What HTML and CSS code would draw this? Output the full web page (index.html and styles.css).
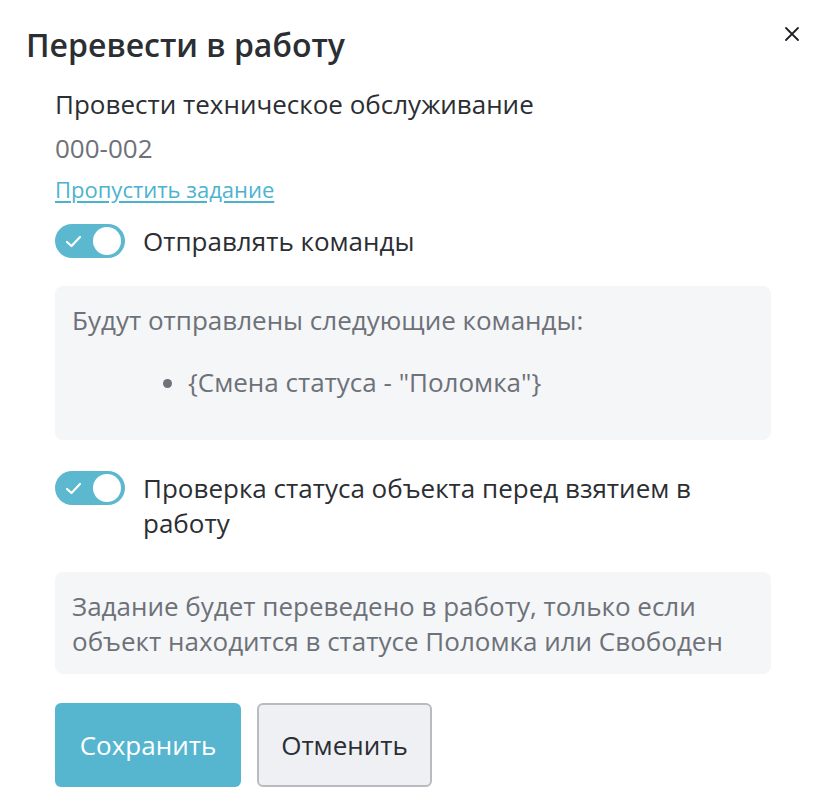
FILE: index.html
```html
<!DOCTYPE html>
<html lang="ru">
<head>
<meta charset="utf-8">
<link rel="stylesheet" href="styles.css">
</head>
<body>
<div class="modal">
  <div class="header">
    <h1 class="title">Перевести в работу</h1>
    <button class="close" aria-label="Закрыть">
      <svg width="14" height="14" viewBox="0 0 14 14"><path d="M1 1L13 13M13 1L1 13" stroke="#1f2226" stroke-width="1.8" stroke-linecap="round"/></svg>
    </button>
  </div>
  <div class="content">
    <div class="task-name">Провести техническое обслуживание</div>
    <div class="task-code">000-002</div>
    <a class="skip" href="#">Пропустить задание</a>
    <label class="toggle-row">
      <span class="toggle">
        <svg class="check" width="17" height="13" viewBox="0 0 17 13"><path d="M2 7L6.5 11L15 2" fill="none" stroke="#fff" stroke-width="2.2" stroke-linecap="round" stroke-linejoin="round"/></svg>
        <span class="knob"></span>
      </span>
      <span class="toggle-text">Отправлять команды</span>
    </label>
    <div class="info info1">
      <div>Будут отправлены следующие команды:</div>
      <ul class="cmds"><li>{Смена статуса - "Поломка"}</li></ul>
    </div>
    <label class="toggle-row toggle-row2">
      <span class="toggle">
        <svg class="check" width="17" height="13" viewBox="0 0 17 13"><path d="M2 7L6.5 11L15 2" fill="none" stroke="#fff" stroke-width="2.2" stroke-linecap="round" stroke-linejoin="round"/></svg>
        <span class="knob"></span>
      </span>
      <span class="toggle-text">Проверка статуса объекта перед взятием в работу</span>
    </label>
    <div class="info info2">Задание будет переведено в работу, только если объект находится в статусе Поломка или Свободен</div>
    <div class="actions">
      <button class="btn btn-primary">Сохранить</button>
      <button class="btn btn-secondary">Отменить</button>
    </div>
  </div>
</div>
</body>
</html>
```
FILE: styles.css
```css
* { box-sizing: border-box; }
html, body { margin: 0; padding: 0; background: #fff; }
body {
  font-family: "Open Sans", "Noto Sans", sans-serif;
  color: #2b2e33;
  width: 822px;
  height: 808px;
  overflow: hidden;
}
.modal { padding: 23px 0 0 0; }
.header {
  display: flex;
  justify-content: space-between;
  align-items: flex-start;
  padding: 0 22px 0 26px;
}
.title {
  margin: 0;
  font-size: 32px;
  font-weight: 600;
  line-height: 44px;
  color: #2b2e33;
}
.close {
  border: 0;
  background: none;
  padding: 0;
  margin-top: 3px;
  width: 16px;
  height: 16px;
  display: flex;
  align-items: center;
  justify-content: center;
}
.content {
  padding: 0 51px 0 55px;
  display: flex;
  flex-direction: column;
  align-items: flex-start;
}
.task-name {
  margin-top: 19px;
  font-size: 26px;
  line-height: 36px;
}
.task-code {
  margin-top: 8px;
  font-size: 26px;
  line-height: 36px;
  color: #6d7178;
}
.skip {
  margin-top: 8px;
  font-size: 22px;
  line-height: 30px;
  color: #4cb3cf;
  text-decoration: underline;
  text-underline-offset: 3px;
}
.toggle-row {
  display: flex;
  align-items: flex-start;
  gap: 18px;
  margin-top: 20px;
}
.toggle {
  position: relative;
  flex: none;
  width: 70px;
  height: 34px;
  border-radius: 17px;
  background: #5bb8cf;
}
.check { position: absolute; left: 10px; top: 11px; }
.knob {
  position: absolute;
  right: 4px;
  top: 3px;
  width: 28px;
  height: 28px;
  border-radius: 50%;
  background: #fff;
}
.toggle-text {
  font-size: 26px;
  line-height: 35px;
}
.info {
  align-self: stretch;
  background: #f5f6f8;
  border-radius: 8px;
  font-size: 26px;
  line-height: 35px;
  color: #6d7178;
}
.info1 {
  margin-top: 27px;
  padding: 17px 17px 18px 17px;
}
.cmds {
  margin: 27px 0 22px 0;
  padding-left: 116px;
}
.toggle-row2 { margin-top: 31px; }
.info2 { margin-top: 31px; padding: 17px 17px 15px 17px; }
.actions {
  display: flex;
  gap: 16px;
  margin-top: 29px;
}
.btn {
  font-family: "Open Sans", "Noto Sans", sans-serif;
  font-size: 26px;
  height: 84px;
  border-radius: 6px;
  padding: 0;
}
.btn-primary {
  background: #57b6cf;
  color: #fff;
  border: 0;
  width: 186px;
}
.btn-secondary {
  background: #eef0f4;
  color: #2b2e33;
  border: 2px solid #b9bbbf;
  width: 175px;
}
```
